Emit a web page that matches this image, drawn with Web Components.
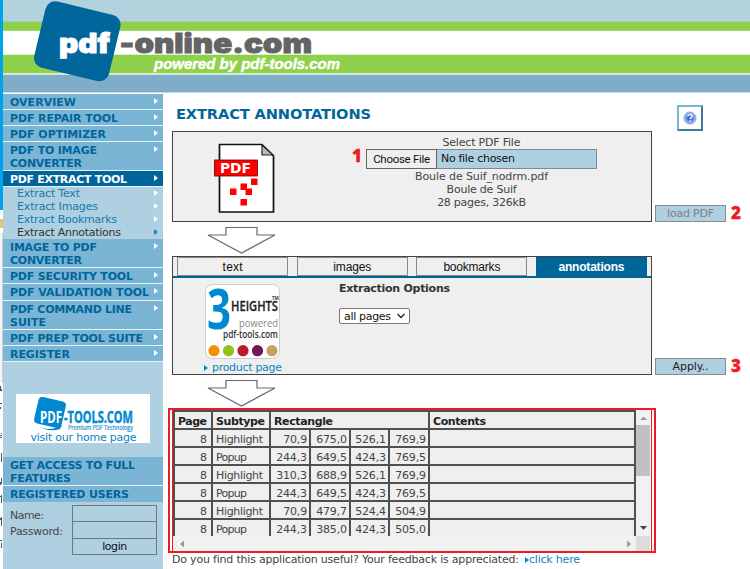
<!DOCTYPE html>
<html lang="en">
<head>
<meta charset="utf-8">
<title>pdf-online.com - Extract Annotations</title>
<style>
html,body{margin:0;padding:0;background:#fff}
body{width:750px;height:569px;overflow:hidden;font-family:"DejaVu Sans",Verdana,sans-serif;font-size:11px;line-height:13px;color:#333}
</style>
</head>
<body>
<pdf-app></pdf-app>
<script>
function define(name, css, html, setup) {
  const t = document.createElement('template');
  t.innerHTML = '<style>*{box-sizing:border-box}' + css + '</style>' + html;
  customElements.define(name, class extends HTMLElement {
    constructor() {
      super();
      this.attachShadow({mode: 'open'}).appendChild(t.content.cloneNode(true));
    }
    connectedCallback() { if (setup) setup(this, this.shadowRoot); }
  });
}

/* One line of text, tracked so that it fills the width given in "w". */
define('fit-text', ':host{display:inline-block;white-space:nowrap}span{display:inline-block}', '<span><slot></slot></span>', (h, r) => {
  const w = +h.getAttribute('w'), s = r.querySelector('span');
  const n = h.textContent.length;
  s.style.letterSpacing = '0px';
  const nat = s.getBoundingClientRect().width;
  if (nat && n > 1) s.style.letterSpacing = ((w - nat) / (n - 1)) + 'px';
  h.style.width = w + 'px';
});

define('site-header', `
:host{display:block;height:94px;position:relative;background:linear-gradient(#b2d2de 0 21px,#a3cfae 21px 22px,#90d14b 22px 30px,#a3d966 30px 31px,#fff 31px 54px,#dff2ca 54px 55px,#90d14b 55px 73px,#dcecc9 73px 74px,#d4e4e7 74px 75px,#7fadc7 75px 92px,#c4dce8 92px 93px,#fff 93px)}
svg{display:block}`, `
<svg width="360" height="94" viewBox="0 0 360 94">
<rect x="-38.500" y="-34" width="77" height="68" rx="10" transform="translate(77.300 41.300) rotate(13.500)" fill="#00669b"/>
<g font-family="Inter,'Liberation Sans',sans-serif" font-weight="900" stroke-width=".9">
<text x="59" y="53.300" font-size="27" fill="#fff" stroke="#fff" textLength="51" lengthAdjust="spacingAndGlyphs">pdf</text>
<text x="119.500" y="53.300" font-size="27" fill="#646464" stroke="#646464" textLength="192.500" lengthAdjust="spacingAndGlyphs">-online.com</text></g>
<text x="154" y="68.500" font-family="'Liberation Sans',Arial,sans-serif" font-weight="bold" font-size="14.500" font-style="italic" fill="#fff" stroke="#fff" stroke-width=".4" textLength="186" lengthAdjust="spacingAndGlyphs">powered by pdf-tools.com</text>
</svg>`);

define('nav-item', `
:host{display:block;position:relative;background:#7bb5d6;color:#00659a;font-weight:bold;padding:2px 0 0 7px;border-bottom:1px solid #e8f3f8;min-height:16px}
:host([active]){background:#006699;color:#fff}
:host([sub]){background:none;color:#1a79ad;font-weight:normal;padding:0 0 0 14px;border:0;height:13px;min-height:0}
:host([current]){color:#333}
i{position:absolute;left:151px;top:4px;width:0;height:0;border:3.5px solid transparent;border-left:4px solid #fff;border-right:0}
:host([sub]) i{top:3px}
:host([current]) i{border-left-color:#1583c2}
:host([plain]) i{display:none}`, '<slot></slot><i></i>');

define('login-form', `
:host{display:grid;grid-template-columns:62px 85px;padding:3px 0 0 7px;grid-auto-rows:16.3px;color:#444;line-height:17px}
label{padding-top:2px}
input,button{width:85px;height:17.300px;border:1px solid #777;background:#aed0e1;margin:0;padding:0;font:11px "DejaVu Sans",sans-serif;border-radius:0;color:#111}
button{grid-column:2}`, `
<label><fit-text w="34">Name:</fit-text></label><input>
<label><fit-text w="53">Password:</fit-text></label><input type="password">
<button><fit-text w="25">login</fit-text></button>`);

define('home-badge', `
:host{display:block;width:134px;height:49px;background:#fff;margin:32px 0 14px 13px}svg{display:block;overflow:visible}`, `
<svg width="134" height="49" viewBox="0 0 134 49">
<rect x="-14" y="-13.500" width="28" height="27" rx="4" transform="translate(34 18.500) rotate(13)" fill="#0089cf"/>
<path d="M20 31Q33 39 46 31L44 35Q33 39 20 31Z" fill="#0089cf"/>
<g font-family="'Open Sans','Noto Sans',sans-serif" font-weight="bold" font-size="16">
<text x="24" y="28.700" fill="#fff" textLength="22" lengthAdjust="spacingAndGlyphs">PDF</text>
<text x="48" y="28.700" fill="#0089cf" stroke="#0089cf" stroke-width=".4" textLength="69" lengthAdjust="spacingAndGlyphs">-TOOLS.COM</text></g>
<text x="52" y="35.500" font-family="'Open Sans',sans-serif" font-size="6.500" fill="#1d93cf" stroke="#1d93cf" stroke-width=".2" textLength="65" lengthAdjust="spacingAndGlyphs">Premium PDF Technology</text>
<text x="14.500" y="46.500" font-family="'DejaVu Sans'" font-size="11" fill="#0b84bf" textLength="106">visit our home page</text>
</svg>`);

define('side-bar', `:host{display:block;width:160px;height:475px;background:#aed0e1;overflow:hidden}
nav-item.a{height:16px}nav-item.b{height:29px}nav-item.c{height:17px}`, `
<nav-item class="a"><fit-text w="66">OVERVIEW</fit-text></nav-item>
<nav-item class="a"><fit-text w="108">PDF REPAIR TOOL</fit-text></nav-item>
<nav-item class="a"><fit-text w="96">PDF OPTIMIZER</fit-text></nav-item>
<nav-item class="b"><fit-text w="87">PDF TO IMAGE</fit-text><br><fit-text w="72">CONVERTER</fit-text></nav-item>
<nav-item class="a" active><fit-text w="117">PDF EXTRACT TOOL</fit-text></nav-item>
<nav-item sub><fit-text w="63">Extract Text</fit-text></nav-item>
<nav-item sub><fit-text w="81">Extract Images</fit-text></nav-item>
<nav-item sub><fit-text w="100">Extract Bookmarks</fit-text></nav-item>
<nav-item sub current><fit-text w="104">Extract Annotations</fit-text></nav-item>
<nav-item class="b"><fit-text w="87">IMAGE TO PDF</fit-text><br><fit-text w="72">CONVERTER</fit-text></nav-item>
<nav-item class="a"><fit-text w="123">PDF SECURITY TOOL</fit-text></nav-item>
<nav-item class="c"><fit-text w="139">PDF VALIDATION TOOL</fit-text></nav-item>
<nav-item class="b"><fit-text w="122">PDF COMMAND LINE</fit-text><br><fit-text w="36">SUITE</fit-text></nav-item>
<nav-item class="a"><fit-text w="133">PDF PREP TOOL SUITE</fit-text></nav-item>
<nav-item class="a"><fit-text w="60">REGISTER</fit-text></nav-item>
<home-badge></home-badge>
<nav-item class="b" plain><fit-text w="125">GET ACCESS TO FULL</fit-text><br><fit-text w="61">FEATURES</fit-text></nav-item>
<nav-item class="a" plain style="border-bottom:0"><fit-text w="119">REGISTERED USERS</fit-text></nav-item>
<login-form></login-form>`);

/* Sliver of the window that lies behind the page. */
define('edge-strip', `:host{display:flex;flex-direction:column;width:3px;height:475px;background:#fff;overflow:hidden}
b{display:block;flex:none;height:116px;background:#00a2e8}
i{display:block;flex:none;height:9px;margin:9px 0 5px;background:#e9c66b}
u{display:block;flex:none;height:150px;background:#f4f4f4;border-right:1px solid #ccc}
svg{display:block;flex:none}`, `<b></b><i></i><u></u>
<svg width="3" height="186"><path d="M0 3h1v5H0zM1 6h1v2H1zM0 20h2v1H0zM0 24h1v2H0zM1 50h1v1H1zM0 52h2v1H0zM0 54h2v1H0zM1 70h1v9H1zM1 95h1v6H1zM0 99h1v3H0zM0 113h2v1H0zM1 112h1v8H1zM0 135h1v2H0zM1 134h1v9H1zM0 157h2v1H0zM1 160h1v5H1z" fill="#555"/></svg>`);

define('pdf-icon', ':host{display:block;width:64px;height:72px}svg{display:block}', `
<svg width="64" height="72" viewBox="0 0 64 72">
<path d="M5.500 1.500H48L59.500 13V69H5.500Z" fill="#fff" stroke="#111" stroke-width="1.700" stroke-linejoin="round"/>
<path d="M48 2V12H59Z" fill="#bbb" stroke="#222" stroke-width="1.200"/>
<rect x=".5" y="17" width="43" height="16" fill="#f00" stroke="#600" stroke-width=".8"/>
<text x="6" y="29.500" font-family="'DejaVu Sans'" font-weight="bold" font-size="13.500" fill="#fff" textLength="31" lengthAdjust="spacingAndGlyphs">PDF</text>
<path d="M37 35.500h6.500v6.500H37zM26.500 40.500h6.500v5H38v6.500h-6.500v-5h-5zM16 45.500h6.500v6.500H16zM26.500 56h6.500v6.500h-6.500z" fill="#f00"/></svg>`);

define('flow-arrow', ':host{display:block;height:34px;padding:4px 0 0 35px}:host([short]){height:33px}svg{display:block}', `
<svg width="70" height="29" viewBox="0 0 70 29"><path d="M19 1.500H50V9H68L34.500 27L1 9H19Z" fill="#fff" stroke="#6b6570" stroke-width="1.200"/></svg>`);

define('heights-logo', ':host{display:block;width:75px;height:75px}svg{display:block;overflow:visible}', `
<svg width="75" height="75" viewBox="0 0 75 75"><rect x=".5" y=".5" width="74" height="74" rx="7" fill="#fff" stroke="#ccc"/>
<text x="2" y="44.500" font-family="'Open Sans','Noto Sans'" font-weight="bold" font-size="56" fill="#0089d0" textLength="24" lengthAdjust="spacingAndGlyphs">3</text>
<text x="26" y="27" font-family="'Open Sans'" font-weight="600" font-size="14.500" fill="#222" stroke="#222" stroke-width=".3" textLength="47" lengthAdjust="spacingAndGlyphs">HEIGHTS</text>
<text x="67" y="16" font-family="'Open Sans'" font-weight="bold" font-size="4.500" fill="#333">TM</text>
<text x="34" y="43" font-family="'Open Sans'" font-size="11" fill="#888" textLength="39" lengthAdjust="spacingAndGlyphs">powered</text>
<text x="18" y="54" font-family="'Open Sans'" font-weight="600" font-size="10" fill="#333" textLength="55" lengthAdjust="spacingAndGlyphs">pdf-tools.com</text>
<circle cx="9" cy="66.700" r="5.600" fill="#f39100"/><circle cx="23.500" cy="66.700" r="5.600" fill="#95c11f"/><circle cx="38" cy="66.700" r="5.600" fill="#be1a2e"/><circle cx="52.500" cy="66.700" r="5.600" fill="#6d1a58"/><circle cx="67" cy="66.700" r="5.600" fill="#ca9e67"/></svg>`);

define('page-title', `:host{display:flex;justify-content:space-between;height:37px;padding:11px 47px 0 4px;color:#00669b;font:bold 14.600px/18px "DejaVu Sans"}
button{width:26px;height:26px;margin:0;padding:0;background:#fff;border:1px solid;border-width:2px;border-color:#79b7d6 #3d7c9c #3d7c9c #79b7d6;display:grid;place-items:center}`, `
<fit-text w="195">EXTRACT ANNOTATIONS</fit-text>
<button aria-label="Help"><svg width="14" height="14" viewBox="0 0 14 14"><defs><radialGradient id="g"><stop offset="0" stop-color="#1538c8"/><stop offset=".5" stop-color="#4d7ee6"/><stop offset="1" stop-color="#c0d3ef"/></radialGradient></defs><circle cx="7" cy="7" r="6" fill="url(#g)" stroke="#8aa3c6" stroke-width="1"/><path d="M4.800 5.500Q5 3.500 7.200 3.600Q9.400 3.800 9 5.700Q8.700 6.700 7.200 7.200V8.300M7 9.300V10.700" fill="none" stroke="#fff" stroke-width="1.400"/></svg></button>`);

define('step-button', `:host{display:block}button{display:block;width:71px;height:17px;margin:0;padding:0;border:1px solid #8a8a8a;border-radius:0;background:#aed0e1;color:#222;font:11px/14px "DejaVu Sans"}
:host([off]) button{color:#808080}`, '<button><slot></slot></button>');

define('step-mark', ':host{display:block;color:#ed1c24;-webkit-text-stroke:.3px #ed1c24;font:800 17px/16px "Open Sans","Noto Sans",sans-serif}', '<slot></slot>');

define('step-row', `:host{display:flex;align-items:flex-end}
section{width:480px;background:#efefef;border:1px solid #444;flex:none}
aside{display:flex;align-items:flex-end;gap:5px;margin-left:3px}
slot[name]::slotted(step-mark){padding-bottom:1px}`, '<section><slot></slot></section><aside><slot name="action"></slot></aside>');

define('file-panel', `:host{display:grid;grid-template-columns:193px 1fr;height:89px;position:relative}
pdf-icon{margin:11px 0 0 41px}
.c{display:flex;flex-direction:column;align-items:center;width:231px;padding-top:4px;color:#444}
.f{display:flex;width:231px;height:20px;border:1px solid #7f8b90;background:#aed0e1;color:#111;line-height:18px}
.f span{width:71px;border:1px solid #666;margin:-1px 4px -1px -1px;background:#efefef;font:11.500px/18px Roboto,sans-serif;text-align:center}
.m{padding-top:1px;text-align:center}
step-mark{position:absolute;left:179px;top:16px}`, `
<pdf-icon></pdf-icon>
<div class="c"><fit-text w="78">Select PDF File</fit-text>
<div class="f"><span><fit-text w="57">Choose File</fit-text></span><fit-text w="74">No file chosen</fit-text></div>
<div class="m"><fit-text w="133">Boule de Suif_nodrm.pdf</fit-text><br><fit-text w="70">Boule de Suif</fit-text><br><fit-text w="89">28 pages, 326kB</fit-text></div></div>
<step-mark>1</step-mark>`);

define('tab-bar', `:host{display:flex;gap:8.400px;height:21px;padding:0 4px;border-bottom:2px solid #006699;font:12px/18px "Liberation Sans",sans-serif;color:#111}
div{width:111.300px;height:19px;border:1px solid #888;text-align:center}
div.on{background:#006699;border-color:#006699;color:#fff;font-weight:bold}
fit-text{vertical-align:top}`, `
<div><fit-text w="20">text</fit-text></div><div><fit-text w="38">images</fit-text></div><div><fit-text w="57">bookmarks</fit-text></div><div class="on"><fit-text w="66">annotations</fit-text></div>`);

define('options-panel', `:host{display:block;height:117px}
.b{display:grid;grid-template-columns:166px 1fr}
.l{padding:6px 0 0 32px;color:#0b84bf}
.l p{margin:2px 0 0 -1px;display:flex;align-items:center;gap:4px;line-height:14px}
i{border:3.500px solid transparent;border-left:4px solid #0b84bf;border-right:0}
.r{padding-top:4px}
.s{width:71px;height:16px;margin-top:13px;border:1px solid #777;border-radius:2px;background:#fff;color:#111;display:flex;align-items:center;gap:6px;padding-left:4px}`, `
<tab-bar></tab-bar><div class="b"><div class="l"><heights-logo></heights-logo><p><i></i><fit-text w="70">product page</fit-text></p></div>
<div class="r"><b><fit-text w="111">Extraction Options</fit-text></b><div class="s"><fit-text w="47">all pages</fit-text><svg width="8" height="6" viewBox="0 0 8 6"><path d="M.5 1L4 4.500L7.500 1" fill="none" stroke="#222" stroke-width="1.300"/></svg></div></div></div>`);

define('result-table', `:host{display:grid;grid-template-columns:464px 14px;grid-template-rows:126px 15px;position:relative;width:488px;height:145px;margin-left:-4px;border:2px solid #ed1c24;padding:0 2px}
:host::before{content:"";position:absolute;left:2px;right:2px;top:0;bottom:0;border:solid #ed1c24;border-width:0 1px;pointer-events:none}
.g{overflow:hidden;background:#efefef;margin-left:1px}
table{border-collapse:collapse;table-layout:fixed;width:463px}
th,td{border:2px solid #505050;height:18px;padding:3px 2px 0 3px;line-height:13px;vertical-align:middle;color:#444}
th{text-align:left;color:#222}td{text-align:right}td.t{text-align:left}
td fit-text,th fit-text{vertical-align:top}
.v{background:#f1f1f1;display:flex;flex-direction:column;align-items:center}
.v b{width:14px;height:51px;background:#c1c1c1}
.h{background:#f1f1f1;display:flex;justify-content:space-between;align-items:center;padding:0 5px 0 8px}
.k{background:#dcdcdc}svg{display:block}`, `
<div class="g"><table><colgroup><col style="width:38px"><col style="width:58px"><col style="width:40px"><col style="width:40px"><col style="width:39px"><col style="width:40px"><col></colgroup><tbody>
<tr><th><fit-text w="29">Page</fit-text></th><th><fit-text w="49">Subtype</fit-text></th><th colspan="4"><fit-text w="59">Rectangle</fit-text></th><th><fit-text w="53">Contents</fit-text></th></tr></tbody></table></div>
<div class="v"><svg width="14" height="15"><path d="M4 10L7.500 6.500L11 10Z" fill="#999"/></svg><b></b><svg width="14" height="60"><path d="M4 50H11L7.500 54Z" fill="#444"/></svg></div>
<div class="h"><svg width="4" height="8"><path d="M4 0.500V7.500L0 4Z" fill="#999"/></svg><svg width="4" height="8"><path d="M0 .5V7.500L4 4Z" fill="#999"/></svg></div><div class="k"></div>`, (h, r) => {
  const rows = [['Highlight','70,9','675,0','526,1','769,9'],['Popup','244,3','649,5','424,3','769,5'],['Highlight','310,3','688,9','526,1','769,9'],['Popup','244,3','649,5','424,3','769,5'],['Highlight','70,9','479,7','524,4','504,9'],['Popup','244,3','385,0','424,3','505,0']];
  const b = r.querySelector('tbody');
  for (const [t, ...n] of rows) {
    const tr = document.createElement('tr');
    tr.innerHTML = '<td style="padding-right:4px">8</td><td class="t"><fit-text w="' + (t === 'Popup' ? 31 : 47) + '">' + t + '</fit-text></td>' +
      n.map(x => '<td><fit-text w="' + (x.length > 4 ? 31 : 24) + '">' + x + '</fit-text></td>').join('') + '<td></td>';
    b.appendChild(tr);
  }
});

define('feedback-line', `:host{display:flex;align-items:center;height:13px;color:#444;white-space:nowrap;line-height:13px}
i{border:3.500px solid transparent;border-left:4px solid #0b84bf;border-right:0;margin-left:6px}a{color:#0b84bf}`, `
<fit-text w="347">Do you find this application useful? Your feedback is appreciated:</fit-text><i></i><a><fit-text w="51">click here</fit-text></a>`);

define('pdf-app', `:host{display:block;width:750px;height:569px;overflow:hidden;position:relative}
.row{display:grid;grid-template-columns:3px 160px 1fr}
main{padding-left:9px}
.e{position:absolute;left:0;top:0;width:3px;height:94px;background:#00a2e8}`, `
<site-header></site-header><div class="e"></div>
<div class="row"><edge-strip></edge-strip><side-bar></side-bar>
<main><page-title></page-title>
<step-row><file-panel></file-panel><step-button slot="action" off><fit-text w="47">load PDF</fit-text></step-button><step-mark slot="action">2</step-mark></step-row>
<flow-arrow></flow-arrow>
<step-row><options-panel></options-panel><step-button slot="action"><fit-text w="36">Apply..</fit-text></step-button><step-mark slot="action">3</step-mark></step-row>
<flow-arrow short></flow-arrow>
<result-table></result-table>
<feedback-line></feedback-line></main></div>`);
</script>
</body>
</html>
